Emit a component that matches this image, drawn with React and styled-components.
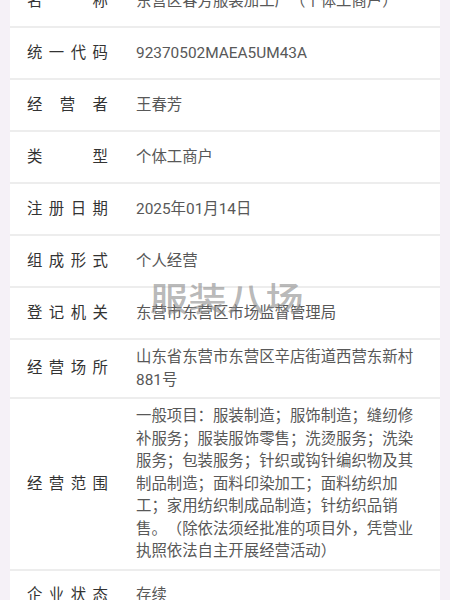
import React from 'react';
import styled, { createGlobalStyle } from 'styled-components';

const GlobalStyle = createGlobalStyle`
    html, body {
        margin: 0;
        padding: 0;
        background: #f5f1f7;
        overflow: hidden;
    }
    body {
        font-family: Roboto, "Noto Sans CJK SC", sans-serif;
        text-spacing-trim: space-all;
    }
`;

const Page = styled.div`
    position: relative;
    width: 450px;
    height: 600px;
    overflow: hidden;
`;

const Card = styled.div`
    margin: -24px 10px 0;
    background: #ffffff;
`;

const Row = styled.div`
    display: flex;
    align-items: center;
    min-height: 52px;
    padding: 6px 0;
    box-sizing: border-box;
    border-bottom: 2px solid #ededed;
    font-size: 15.4px;
    line-height: 22.5px;
`;

const Label = styled.div`
    flex: 0 0 81px;
    display: flex;
    justify-content: space-between;
    margin-left: 17px;
    margin-right: 28px;
    color: #333333;
`;

const Value = styled.div`
    flex: 1;
    padding-right: 20px;
    color: #585858;
    word-break: break-all;
    text-spacing-trim: space-all;
`;

const Watermark = styled.div`
    position: absolute;
    left: 150px;
    top: 280px;
    font-family: "Noto Sans CJK SC", sans-serif;
    font-size: 38px;
    font-weight: 500;
    line-height: 1;
    letter-spacing: 0.5px;
    color: rgba(140, 140, 140, 0.62);
    transform: scaleY(0.88);
    transform-origin: top left;
    pointer-events: none;
`;

const rows = [
    ['名称', '东营区春芳服装加工厂（个体工商户）'],
    ['统一代码', '92370502MAEA5UM43A'],
    ['经营者', '王春芳'],
    ['类型', '个体工商户'],
    ['注册日期', '2025年01月14日'],
    ['组成形式', '个人经营'],
    ['登记机关', '东营市东营区市场监督管理局'],
    ['经营场所', '山东省东营市东营区辛店街道西营东新村881号'],
    [
        '经营范围',
        '一般项目：服装制造；服饰制造；缝纫修补服务；服装服饰零售；洗烫服务；洗染服务；包装服务；针织或钩针编织物及其制品制造；面料印染加工；面料纺织加工；家用纺织制成品制造；针纺织品销售。（除依法须经批准的项目外，凭营业执照依法自主开展经营活动）'
    ],
    ['企业状态', '存续']
];

const App = () => {
    return (
        <Page>
            <GlobalStyle />
            <Card>
                {rows.map(([label, value]) => (
                    <Row key={label}>
                        <Label>
                            {label.split('').map((ch, i) => (
                                <span key={i}>{ch}</span>
                            ))}
                        </Label>
                        <Value>{value}</Value>
                    </Row>
                ))}
            </Card>
            <Watermark>服装八场</Watermark>
        </Page>
    );
};

export default App;
